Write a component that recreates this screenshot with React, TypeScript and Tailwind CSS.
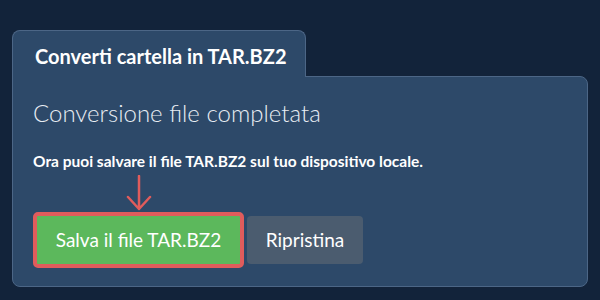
export default function App() {
  return (
    <div
      className="w-[600px] h-[300px] bg-[#12233a] pl-[12px] pt-[30px]"
      style={{ fontFamily: 'Lato, "Open Sans", sans-serif' }}
    >
      <div className="relative z-10 -mb-px flex h-[47px] w-[294px] items-center rounded-t-lg border border-b-0 border-[#4c6686] bg-[#2d4969] pl-[22px] pt-[4px]">
        <span className="text-[20px] font-bold text-white">Converti cartella in TAR.BZ2</span>
      </div>
      <div className="h-[211px] w-[576px] rounded-b-lg rounded-tr-lg border border-[#4c6686] bg-[#2d4969] px-[20px] pt-[20px]">
        <h2 className="text-[24px] font-light leading-[32px] text-[#e8edf3]">Conversione file completata</h2>
        <p className="mt-[22px] text-[15.5px] font-bold leading-[20px] text-white">
          Ora puoi salvare il file TAR.BZ2 sul tuo dispositivo locale.
        </p>
        <div className="ml-[93px] mt-[4px] h-[36px] w-[26px]">
          <svg width="26" height="36" viewBox="0 0 26 36" fill="none">
            <path d="M13 1 V34 M2 22 L13 34 L24 22" stroke="#e05c5c" strokeWidth="2.5" strokeLinecap="round" strokeLinejoin="round" />
          </svg>
        </div>
        <div className="mt-[1px] flex items-center gap-[3px]">
          <button className="flex h-[56px] w-[211px] items-center justify-center rounded-[5px] border-[4px] border-[#e05c5c] bg-[#5cb85c] text-[19px] text-white">
            Salva il file TAR.BZ2
          </button>
          <button className="flex h-[48px] w-[116px] items-center justify-center rounded-[4px] bg-[#4b5c6f] text-[19px] text-white">
            Ripristina
          </button>
        </div>
      </div>
    </div>
  );
}
